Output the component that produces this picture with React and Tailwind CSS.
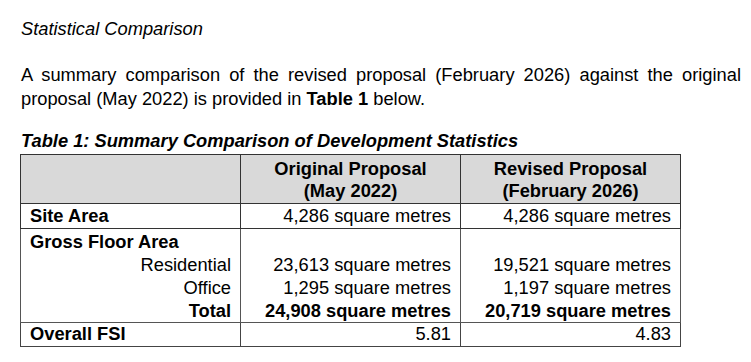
const rows = [
  { label: "Original Proposal", sub: "(May 2022)" },
  { label: "Revised Proposal", sub: "(February 2026)" },
];

const gfa = [
  { name: "Residential", a: "23,613 square metres", b: "19,521 square metres" },
  { name: "Office", a: "1,295 square metres", b: "1,197 square metres" },
  { name: "Total", a: "24,908 square metres", b: "20,719 square metres", bold: true },
];

export default function App() {
  return (
    <div
      className="min-h-screen w-[751px] bg-white pl-[21px] pr-[10px] pt-[18px] text-[18.3px] text-black"
      style={{ fontFamily: '"Liberation Sans", Arial, sans-serif' }}
    >
      {/* Section heading */}
      <p className="italic leading-[22px]">Statistical Comparison</p>

      {/* Intro paragraph */}
      <p className="mt-[23px] text-justify leading-[24px]">
        A summary comparison of the revised proposal (February 2026) against the original
        proposal (May 2022) is provided in <b>Table 1</b> below.
      </p>

      {/* Table caption */}
      <p className="mt-[19px] font-bold italic leading-[22px]">
        Table 1: Summary Comparison of Development Statistics
      </p>

      <table className="-ml-px mt-[2px] w-[661px] table-fixed border-collapse">
        <colgroup>
          <col className="w-[220px]" />
          <col className="w-[220px]" />
          <col className="w-[220px]" />
        </colgroup>
        <thead>
          <tr className="bg-[#d9d9d9]">
            <th className="border border-[#333] p-0" />
            {rows.map((r) => (
              <th
                key={r.label}
                className="border border-[#333] px-[9px] pb-px pt-[3px] text-center font-bold leading-[22px]"
              >
                {r.label}
                <br />
                {r.sub}
              </th>
            ))}
          </tr>
        </thead>
        <tbody>
          <tr>
            <td className="border border-[#333] px-[9px] py-px font-bold leading-[22px]">Site Area</td>
            <td className="border border-[#333] px-[9px] py-px text-right leading-[22px]">4,286 square metres</td>
            <td className="border border-[#333] px-[9px] py-px text-right leading-[22px]">4,286 square metres</td>
          </tr>
          <tr>
            <td className="border border-[#555] px-[9px] pb-0 pt-px leading-[23px]">
              <div className="font-bold">Gross Floor Area</div>
              {gfa.map((g) => (
                <div key={g.name} className={`text-right ${g.bold ? "font-bold" : ""}`}>
                  {g.name}
                </div>
              ))}
            </td>
            <td className="border border-[#555] px-[9px] pb-0 pt-px text-right leading-[23px]">
              <div>&nbsp;</div>
              {gfa.map((g) => (
                <div key={g.name} className={g.bold ? "font-bold" : ""}>
                  {g.a}
                </div>
              ))}
            </td>
            <td className="border border-[#555] px-[9px] pb-0 pt-px text-right leading-[23px]">
              <div>&nbsp;</div>
              {gfa.map((g) => (
                <div key={g.name} className={g.bold ? "font-bold" : ""}>
                  {g.b}
                </div>
              ))}
            </td>
          </tr>
          <tr>
            <td className="border border-[#444] px-[9px] pb-px pt-0 font-bold leading-[22px]">Overall FSI</td>
            <td className="border border-[#444] px-[9px] pb-px pt-0 text-right leading-[22px]">5.81</td>
            <td className="border border-[#444] px-[9px] pb-px pt-0 text-right leading-[22px]">4.83</td>
          </tr>
        </tbody>
      </table>
    </div>
  );
}
